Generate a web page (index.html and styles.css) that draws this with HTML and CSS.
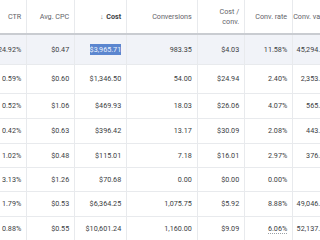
FILE: index.html
```html
<!DOCTYPE html>
<html lang="en">
<head>
  <meta charset="UTF-8" />
  <title>Campaign stats</title>
  <link rel="stylesheet" href="styles.css">
</head>
<body>
  <div class="scroller">
    <table class="stats">
      <colgroup>
        <col class="c-ctr"><col class="c-cpc"><col class="c-cost"><col class="c-conv">
        <col class="c-cpa"><col class="c-rate"><col class="c-value">
      </colgroup>
      <thead>
        <tr>
          <th>CTR</th>
          <th>Avg. CPC</th>
          <th class="sorted"><span class="arrow">&#8595;</span> Cost</th>
          <th>Conversions</th>
          <th>Cost /<br>conv.</th>
          <th>Conv. rate</th>
          <th>Conv. value</th>
        </tr>
      </thead>
      <tbody>
        <tr class="total h30">
          <td>24.92%</td><td>$0.47</td><td><span class="selected">$3,965.71</span></td>
          <td>983.35</td><td>$4.03</td><td>11.58%</td><td>45,294.36</td>
        </tr>
        <tr class="h29">
          <td>0.59%</td><td>$0.60</td><td>$1,346.50</td>
          <td>54.00</td><td>$24.94</td><td>2.40%</td><td>2,353.69</td>
        </tr>
        <tr class="h25">
          <td>0.52%</td><td>$1.06</td><td>$469.93</td>
          <td>18.03</td><td>$26.06</td><td>4.07%</td><td>565.82</td>
        </tr>
        <tr class="h25">
          <td>0.42%</td><td>$0.63</td><td>$396.42</td>
          <td>13.17</td><td>$30.09</td><td>2.08%</td><td>443.10</td>
        </tr>
        <tr class="h24">
          <td>1.02%</td><td>$0.48</td><td>$115.01</td>
          <td>7.18</td><td>$16.01</td><td>2.97%</td><td>376.02</td>
        </tr>
        <tr class="h24">
          <td>3.13%</td><td>$1.26</td><td>$70.68</td>
          <td>0.00</td><td>$0.00</td><td>0.00%</td><td></td>
        </tr>
        <tr class="h25">
          <td>1.79%</td><td>$0.53</td><td>$6,364.25</td>
          <td>1,075.75</td><td>$5.92</td><td>8.88%</td><td>49,046.18</td>
        </tr>
        <tr class="h24">
          <td>0.88%</td><td>$0.55</td><td>$10,601.24</td>
          <td>1,160.00</td><td>$9.09</td><td><span class="dotted">6.06%</span></td><td>52,137.90</td>
        </tr>
      </tbody>
    </table>
  </div>
</body>
</html>
```
FILE: styles.css
```css
* { box-sizing: border-box; }

body {
  margin: 0;
  background: #fff;
  font-family: Roboto, "Liberation Sans", sans-serif;
  font-size: 7.2px;
  color: #3c4043;
}

.scroller {
  width: 320px;
  height: 240px;
  overflow: hidden;
}

.stats {
  margin-left: -14.3px;
  border-collapse: collapse;
  table-layout: fixed;
  width: 348px;
}

.c-ctr { width: 41px; }
.c-cpc { width: 48px; }
.c-cost { width: 52px; }
.c-conv { width: 70.6px; }
.c-cpa { width: 47.4px; }
.c-rate { width: 48px; }
.c-value { width: 41px; }

.stats th,
.stats td {
  text-align: right;
  padding: 0 5px 0 0;
  white-space: nowrap;
  border-right: 1px solid #e8eaed;
  vertical-align: middle;
}

.stats th {
  height: 34px;
  font-weight: 400;
  color: #5f6368;
  line-height: 10px;
  border-bottom: 2px solid #c9ccd1;
}

.stats th.sorted {
  font-weight: 700;
  color: #3c4043;
}

.arrow {
  font-weight: 400;
  color: #80868b;
  margin-right: 1px;
}

.stats td {
  border-bottom: 1px solid #e8eaed;
}

.h30 td { height: 30px; }
.h29 td { height: 29px; }
.h25 td { height: 25px; }
.h24 td { height: 24px; }

.total td {
  background: #f1f3f8;
}

.selected {
  background: #5b86cf;
  color: #eef3fd;
  padding: 1px 0;
}

.dotted {
  border-bottom: 1px dotted #9aa0a6;
}
```
